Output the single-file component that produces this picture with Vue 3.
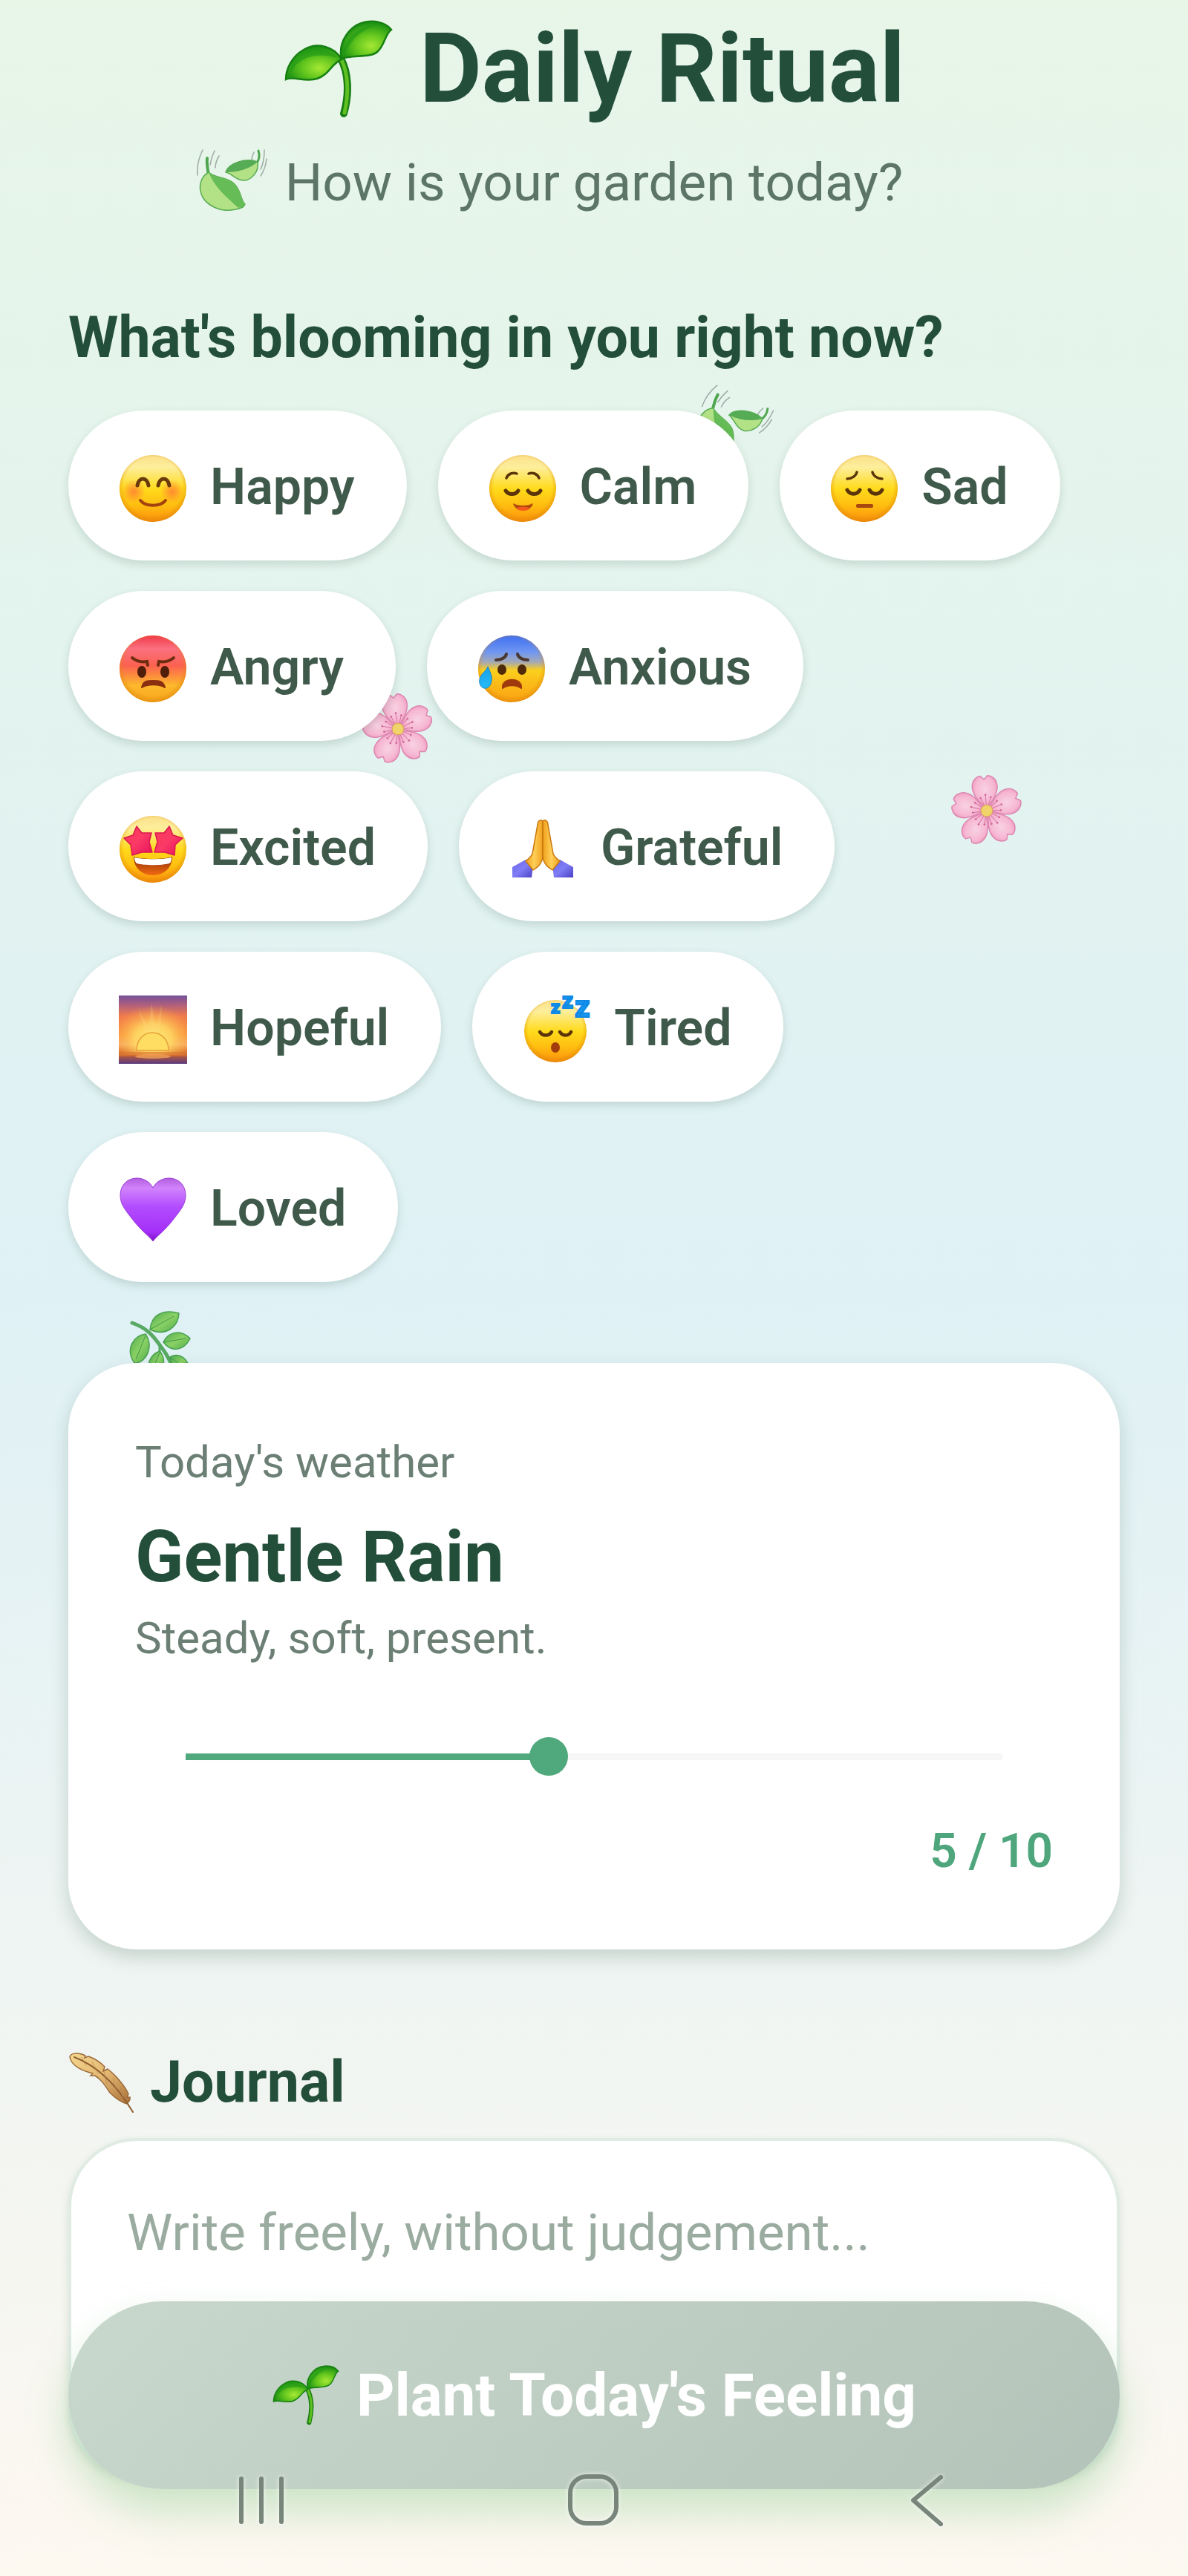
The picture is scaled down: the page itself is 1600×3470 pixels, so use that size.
<script setup>
import { computed, ref } from 'vue'

const moods = [
  { key: 'happy', label: 'Happy' },
  { key: 'calm', label: 'Calm' },
  { key: 'sad', label: 'Sad' },
  { key: 'angry', label: 'Angry' },
  { key: 'anxious', label: 'Anxious' },
  { key: 'excited', label: 'Excited' },
  { key: 'grateful', label: 'Grateful' },
  { key: 'hopeful', label: 'Hopeful' },
  { key: 'tired', label: 'Tired' },
  { key: 'loved', label: 'Loved' },
]

const yellowFaces = ['happy', 'calm', 'sad', 'excited']
const petals = [0, 72, 144, 216, 288]

const selected = ref('')
const intensity = ref(5)
const entry = ref('')

const fill = computed(() => ((intensity.value - 1) / 9) * 100 + '%')
</script>

<template>
  <div class="page">
    <svg class="defs" aria-hidden="true">
      <defs>
        <linearGradient id="g-face" x1="0" y1="0" x2="0" y2="1">
          <stop offset="0" stop-color="#fbe08a" />
          <stop offset=".18" stop-color="#fdee9c" />
          <stop offset=".5" stop-color="#ffdb1c" />
          <stop offset=".75" stop-color="#ffbe10" />
          <stop offset="1" stop-color="#fb8f0c" />
        </linearGradient>
        <radialGradient id="g-rim" cx=".5" cy=".47" r=".53">
          <stop offset=".82" stop-color="#e08a00" stop-opacity="0" />
          <stop offset="1" stop-color="#d97f08" stop-opacity=".55" />
        </radialGradient>
        <radialGradient id="g-cheek">
          <stop offset="0" stop-color="#ff7038" stop-opacity=".75" />
          <stop offset="1" stop-color="#ff7038" stop-opacity="0" />
        </radialGradient>
        <linearGradient id="g-angry" x1="0" y1="0" x2="0" y2="1">
          <stop offset="0" stop-color="#f03a4a" />
          <stop offset=".2" stop-color="#fb7080" />
          <stop offset=".45" stop-color="#fb6150" />
          <stop offset=".75" stop-color="#fdb82c" />
          <stop offset="1" stop-color="#f7a51c" />
        </linearGradient>
        <linearGradient id="g-anxious" x1="0" y1="0" x2="0" y2="1">
          <stop offset="0" stop-color="#3f6ff0" />
          <stop offset=".25" stop-color="#6f97f2" />
          <stop offset=".4" stop-color="#a5a9b4" />
          <stop offset=".52" stop-color="#fbcf1d" />
          <stop offset="1" stop-color="#fba012" />
        </linearGradient>
        <linearGradient id="g-drop" x1="0" y1="0" x2="0" y2="1">
          <stop offset="0" stop-color="#1c9fe8" />
          <stop offset="1" stop-color="#25bdf8" />
        </linearGradient>
        <linearGradient id="g-star" x1="0" y1="0" x2="1" y2="1">
          <stop offset="0" stop-color="#f93a58" />
          <stop offset=".5" stop-color="#fb3a66" />
          <stop offset="1" stop-color="#e4105c" />
        </linearGradient>
        <linearGradient id="g-mouth" x1="0" y1="0" x2="0" y2="1">
          <stop offset="0" stop-color="#8c2f0a" />
          <stop offset="1" stop-color="#f26a10" />
        </linearGradient>
        <linearGradient id="g-hand" x1="0" y1="0" x2="1" y2="0">
          <stop offset="0" stop-color="#f0a01c" />
          <stop offset=".5" stop-color="#ffcf58" />
          <stop offset="1" stop-color="#f2a01e" />
        </linearGradient>
        <linearGradient id="g-cuff" x1="0" y1="0" x2="1" y2="1">
          <stop offset="0" stop-color="#6a63e8" />
          <stop offset=".5" stop-color="#7f7df6" />
          <stop offset="1" stop-color="#4b3fc4" />
        </linearGradient>
        <linearGradient id="g-sky" x1="0" y1="0" x2="0" y2="1">
          <stop offset="0" stop-color="#74509a" />
          <stop offset=".14" stop-color="#b0607c" />
          <stop offset=".3" stop-color="#f07a4c" />
          <stop offset=".58" stop-color="#fa9340" />
          <stop offset=".72" stop-color="#f6a868" />
          <stop offset=".8" stop-color="#e27a34" />
          <stop offset=".88" stop-color="#b45a3c" />
          <stop offset="1" stop-color="#5a3a80" />
        </linearGradient>
        <radialGradient id="g-glow" cx=".5" cy=".7" r=".6">
          <stop offset="0" stop-color="#fff07c" />
          <stop offset=".45" stop-color="#ffdf66" stop-opacity=".8" />
          <stop offset="1" stop-color="#ffb040" stop-opacity="0" />
        </radialGradient>
        <linearGradient id="g-heart" x1="0" y1="0" x2="0" y2="1">
          <stop offset="0" stop-color="#b35fe0" />
          <stop offset=".16" stop-color="#d183fb" />
          <stop offset=".45" stop-color="#b24dff" />
          <stop offset=".85" stop-color="#a52ff8" />
          <stop offset="1" stop-color="#7f10c8" />
        </linearGradient>
        <radialGradient id="g-petal" cx=".5" cy=".4" r=".6">
          <stop offset="0" stop-color="#fad0e2" />
          <stop offset=".6" stop-color="#f8b4d1" />
          <stop offset="1" stop-color="#f08ab6" />
        </radialGradient>
        <linearGradient id="g-leaf" x1="0" y1="0" x2="1" y2="1">
          <stop offset="0" stop-color="#43a545" />
          <stop offset=".5" stop-color="#84cf58" />
          <stop offset="1" stop-color="#46a843" />
        </linearGradient>
        <radialGradient id="g-sprout" cx=".6" cy=".65" r=".6">
          <stop offset="0" stop-color="#a5e834" />
          <stop offset=".5" stop-color="#63c61e" />
          <stop offset="1" stop-color="#1f9414" />
        </radialGradient>
        <linearGradient id="g-feather" x1="0" y1="0" x2="1" y2="1">
          <stop offset="0" stop-color="#f4d78e" />
          <stop offset=".5" stop-color="#e3b873" />
          <stop offset="1" stop-color="#a9713a" />
        </linearGradient>

        <symbol id="sprout" viewBox="0 0 150 132">
          <path d="M78 52C88 70 90 98 82 126" fill="none" stroke="#1a7d14" stroke-width="10" stroke-linecap="round" />
          <path d="M79 54C88 72 89 98 83 125" fill="none" stroke="#5fc022" stroke-width="5" stroke-linecap="round" />
          <path d="M79 52C74 30 90 4 116 2C128 1 140 5 146 13C138 18 137 34 128 42C118 52 94 46 79 52Z" fill="url(#g-sprout)" stroke="#178012" stroke-width="2.500" />
          <path d="M80 50C88 40 92 18 126 7C100 8 82 26 80 50Z" fill="#1f9a18" opacity=".6" />
          <path d="M79 53C70 36 46 29 28 40C12 49 4 66 4 80C14 75 30 84 46 79C62 74 66 58 79 53Z" fill="url(#g-sprout)" stroke="#178012" stroke-width="2.500" />
          <path d="M11 71C20 50 45 43 74 51C58 36 34 35 22 46C12 54 10 64 11 71Z" fill="#1f9a18" opacity=".6" />
        </symbol>

        <symbol id="leaves" viewBox="0 0 96 84">
          <g fill="none" stroke="#97a5a0" stroke-width="1.500" stroke-linecap="round">
            <path d="M8 2C2 14 0 24 1 36" />
            <path d="M24 3C21 9 19 15 18 22" />
            <path d="M30 10C27 15 25 20 25 26" />
            <path d="M77 5C75 9 74 13 74 16" />
            <path d="M91 2C91 12 90 20 86 28" />
            <path d="M94 14C93 24 90 31 86 37" />
          </g>
          <path d="M14 13C13 22 15 28 16 36" fill="none" stroke="#43a044" stroke-width="4" stroke-linecap="round" />
          <path d="M16 32C5 38 1 52 8 66C16 78 32 85 46 83C56 82 64 79 65 75C59 70 60 56 50 47C40 38 24 40 16 32Z" fill="#aee07e" stroke="#4ea648" stroke-width="1.500" />
          <path d="M16 32C24 52 38 64 56 80C62 79 64 77 65 75C59 70 60 56 50 47C40 38 24 40 16 32Z" fill="#5cb84a" />
          <path d="M83 3C85 10 84 14 81 20" fill="none" stroke="#43a044" stroke-width="3" stroke-linecap="round" />
          <path d="M39 32C42 20 66 12 82 18C84 30 76 40 66 43C54 44 48 34 39 32Z" fill="#aee07e" stroke="#4ea648" stroke-width="1.500" />
          <path d="M39 32C42 20 66 12 82 18C70 28 56 32 39 32Z" fill="#4aa549" />
        </symbol>

        <symbol id="blossom" viewBox="-50 -50 100 100">
          <g v-for="angle in petals" :key="angle" :transform="`rotate(${angle})`">
            <path d="M0 -2C-9 -13 -19 -24 -17 -36C-16 -43 -10 -48 -5 -48L0 -43L5 -48C10 -48 16 -43 17 -36C19 -24 9 -13 0 -2Z" fill="url(#g-petal)" stroke="#dc7dab" stroke-width="1.500" />
            <path d="M0 -5V-22M-2 -5L-7 -18M2 -5L7 -18" stroke="#d86a9c" stroke-width="1" fill="none" />
            <circle cx="0" cy="-22" r="1.400" fill="#cf5d92" />
            <circle cx="-7" cy="-18" r="1.400" fill="#cf5d92" />
            <circle cx="7" cy="-18" r="1.400" fill="#cf5d92" />
          </g>
          <circle r="8" fill="#f3d25e" stroke="#d9a04c" stroke-width="1" />
        </symbol>

        <symbol id="herb" viewBox="0 0 84 96">
          <path d="M4 17C24 24 32 34 42 48C50 58 58 70 62 90" fill="none" stroke="#4da357" stroke-width="5" stroke-linecap="round" />
          <path d="M41 48V62" stroke="#4da357" stroke-width="3" />
          <g fill="url(#g-leaf)" stroke="#3c9a42" stroke-width="1.500">
            <path d="M28 26C30 6 46 -2 67 4C66 22 50 36 28 26Z" />
            <path d="M46 43C52 30 68 24 82 38C74 54 58 58 46 43Z" />
            <path d="M22 32C6 34 -6 52 7 71C22 72 34 50 22 32Z" />
            <path d="M41 55C28 60 22 74 28 88C42 90 54 70 41 55Z" />
            <path d="M55 63C68 56 80 66 81 80C72 88 58 80 55 63Z" />
          </g>
          <g fill="none" stroke="#338f3e" stroke-width="1">
            <path d="M28 26L60 8M46 43L76 38M22 34L9 66M41 57L31 82M56 64L76 78" />
          </g>
        </symbol>

        <symbol id="feather" viewBox="0 0 92 84">
          <path d="M2 8C3 3 10 2 18 4L23 6L22 9L27 7C36 10 44 16 49 21L47 27L53 24C66 34 78 50 81 58L79 62L83 62C84 66 81 69 79 71C68 68 60 60 56 56C48 44 44 38 36 33L30 33L33 30C20 27 4 20 2 8Z" fill="url(#g-feather)" stroke="#9c6a38" stroke-width="1.500" />
          <path d="M8 8C34 18 62 40 87 82" fill="none" stroke="#8f5f32" stroke-width="2" stroke-linecap="round" />
          <path d="M18 8L24 20M32 14L40 30M48 27L52 44M60 36L66 58M70 48L74 66" stroke="#b98548" stroke-width="1" opacity=".7" />
        </symbol>
      </defs>
    </svg>

    <div class="garden" aria-hidden="true">
      <svg class="drift drift-a"><use href="#leaves" /></svg>
      <svg class="drift drift-b"><use href="#leaves" /></svg>
      <svg class="drift petal petal-a"><use href="#blossom" /></svg>
      <svg class="drift petal petal-b"><use href="#blossom" /></svg>
      <svg class="drift sprig"><use href="#herb" /></svg>
    </div>

    <main class="content">
      <header class="header">
        <h1 class="title">
          <svg class="title-icon" aria-hidden="true"><use href="#sprout" /></svg>
          <span>Daily Ritual</span>
        </h1>
        <p class="subtitle">How is your garden today?</p>
      </header>

      <section class="moods" aria-labelledby="mood-heading">
        <h2 id="mood-heading" class="heading">What's blooming in you right now?</h2>
        <div class="chips">
          <button
            v-for="mood in moods"
            :key="mood.key"
            type="button"
            class="chip"
            :aria-pressed="selected === mood.key"
            @click="selected = mood.key"
          >
            <svg class="emoji" viewBox="0 0 92 92" aria-hidden="true">
              <template v-if="yellowFaces.includes(mood.key)">
                <circle cx="46" cy="46" r="45" fill="url(#g-face)" />
                <circle cx="46" cy="46" r="45" fill="url(#g-rim)" />
              </template>

              <g v-if="mood.key === 'happy'">
                <circle cx="20" cy="50" r="16" fill="url(#g-cheek)" />
                <circle cx="72" cy="50" r="16" fill="url(#g-cheek)" />
                <g fill="none" stroke="#6b3a0c" stroke-width="5" stroke-linecap="round">
                  <path d="M25 42C27 30 38 30 40 42" />
                  <path d="M53 42C55 30 66 30 68 42" />
                </g>
                <path d="M29 62C36 71 56 71 63 62" fill="none" stroke="#a3420f" stroke-width="4" stroke-linecap="round" />
              </g>

              <g v-else-if="mood.key === 'calm'">
                <g fill="none" stroke="#5b3409" stroke-width="3.500" stroke-linecap="round">
                  <path d="M24 32C26 26 33 24 38 26" />
                  <path d="M54 26C59 24 66 26 68 32" />
                </g>
                <g fill="none" stroke="#5b3409" stroke-width="5" stroke-linecap="round">
                  <path d="M23 49C27 55 36 55 40 49" />
                  <path d="M53 49C57 55 66 55 70 49" />
                </g>
                <path d="M33 66C40 70 52 70 60 66C58 78 35 78 33 66Z" fill="#b24a10" />
                <path d="M37 73C42 70 51 70 56 73C52 77 41 77 37 73Z" fill="#f4581c" />
              </g>

              <g v-else-if="mood.key === 'sad'">
                <g fill="none" stroke="#5b3409" stroke-width="3.500" stroke-linecap="round">
                  <path d="M23 33C29 33 35 29 36 24" />
                  <path d="M57 24C58 29 64 33 70 33" />
                </g>
                <g fill="none" stroke="#5b3409" stroke-width="5" stroke-linecap="round">
                  <path d="M23 48C27 55 36 55 40 48" />
                  <path d="M53 48C57 55 66 55 70 48" />
                </g>
                <rect x="35" y="67" width="23" height="5" rx="2" fill="#a8470f" />
              </g>

              <g v-else-if="mood.key === 'angry'">
                <circle cx="46" cy="46" r="45" fill="url(#g-angry)" />
                <circle cx="46" cy="46" r="45" fill="url(#g-rim)" />
                <g fill="none" stroke="#6e2c10" stroke-width="4" stroke-linecap="round">
                  <path d="M18 31C24 36 32 37 38 36L39 41" />
                  <path d="M74 31C68 36 60 37 54 36L53 41" />
                </g>
                <ellipse cx="31" cy="50" rx="6" ry="8" fill="#4f1e0a" />
                <ellipse cx="62" cy="50" rx="6" ry="8" fill="#4f1e0a" />
                <path d="M31 71C33 62 38 62 46 62C54 62 60 62 62 71C55 66 38 66 31 71Z" fill="#8a2f10" stroke="#8a2f10" stroke-width="2" stroke-linejoin="round" />
              </g>

              <g v-else-if="mood.key === 'anxious'">
                <circle cx="46" cy="46" r="45" fill="url(#g-anxious)" />
                <circle cx="46" cy="46" r="45" fill="url(#g-rim)" />
                <g fill="none" stroke="#4a3730" stroke-width="4" stroke-linecap="round">
                  <path d="M25 34C32 34 38 31 39 26" />
                  <path d="M54 26C55 31 61 34 68 34" />
                </g>
                <ellipse cx="33" cy="47" rx="6" ry="7" fill="#4f2a0a" />
                <ellipse cx="60" cy="47" rx="6" ry="7" fill="#4f2a0a" />
                <path d="M34 72C32 57 61 57 59 72C53 67 40 67 34 72Z" fill="#a03a0c" stroke="#a03a0c" stroke-width="2" stroke-linejoin="round" />
                <path d="M14 43C17 50 20 55 19 62C18 70 13 73 9 72C4 71 2 65 3 60C4 53 11 50 14 43Z" fill="url(#g-drop)" stroke="#1383c8" stroke-width="1" />
              </g>

              <g v-else-if="mood.key === 'excited'">
                <path d="M20 56C30 60 62 60 72 56C72 70 62 81 46 81C30 81 20 70 20 56Z" fill="url(#g-mouth)" />
                <path d="M21 57C31 60 61 60 71 57C71 61 70 64 68 65C58 68 34 68 24 65C22 63 21 60 21 57Z" fill="#fff" />
                <g fill="url(#g-star)" stroke="#d9174e" stroke-width="1.500" stroke-linejoin="round">
                  <path d="M24 15L31 24L44 24L41 36L45 50L31 50L18 54L16 40L7 31L19 27Z" />
                  <path d="M68 15L73 27L86 31L76 40L75 54L62 50L48 50L52 36L49 24L61 24Z" />
                </g>
              </g>

              <g v-else-if="mood.key === 'grateful'">
                <path d="M4 70L22 60L32 68L30 84L4 84Z" fill="url(#g-cuff)" />
                <path d="M86 70L68 60L58 68L60 84L86 84Z" fill="url(#g-cuff)" />
                <path d="M45 8C42 5 38 8 38 13L31 52C29 57 24 60 22 62L32 74C38 70 44 66 45 56Z" fill="url(#g-hand)" stroke="#c9780e" stroke-width="1.500" stroke-linejoin="round" />
                <path d="M45 8C48 5 52 8 52 13L59 52C61 57 66 60 68 62L58 74C52 70 46 66 45 56Z" fill="url(#g-hand)" stroke="#c9780e" stroke-width="1.500" stroke-linejoin="round" />
              </g>

              <g v-else-if="mood.key === 'hopeful'">
                <rect width="92" height="92" fill="url(#g-sky)" />
                <rect y="6" width="92" height="74" fill="url(#g-glow)" />
                <path d="M36 50L26 16L40 44L44 10L50 44L58 12L56 48Z" fill="#ffd880" opacity=".25" />
                <path d="M24 74C24 60 33 50 45 50C58 50 67 60 67 74Z" fill="#ffdc62" stroke="#e8a03c" stroke-width="1.500" />
                <path d="M0 76H92V82H0Z" fill="#e0742c" opacity=".6" />
                <ellipse cx="46" cy="82" rx="24" ry="3" fill="#f0a056" opacity=".8" />
              </g>

              <g v-else-if="mood.key === 'tired'">
                <circle cx="44" cy="48" r="42" fill="url(#g-face)" />
                <circle cx="44" cy="48" r="42" fill="url(#g-rim)" />
                <g fill="none" stroke="#5b3409" stroke-width="4.500" stroke-linecap="round">
                  <path d="M23 49C27 55 35 55 39 49" />
                  <path d="M50 49C54 55 62 55 65 49" />
                </g>
                <ellipse cx="44" cy="70" rx="6" ry="7" fill="#a33d0c" />
                <g class="zzz" fill="#1496f0" stroke="#1089e4">
                  <text x="38" y="24" font-size="24">z</text>
                  <text x="53" y="17" font-size="29">z</text>
                  <text x="70" y="29" font-size="40">z</text>
                </g>
              </g>

              <g v-else>
                <path d="M46 88C42 82 30 74 18 58C8 45 2 38 2 26C2 12 12 3 24 3C34 3 42 8 46 16C50 8 58 3 68 3C80 3 90 12 90 26C90 38 84 45 74 58C62 74 50 82 46 88Z" fill="url(#g-heart)" stroke="#9a3fd6" stroke-width="1" />
              </g>
            </svg>
            <span>{{ mood.label }}</span>
          </button>
        </div>
      </section>

      <section class="weather">
        <p class="weather-label">Today's weather</p>
        <h2 class="weather-title">Gentle Rain</h2>
        <p class="weather-note">Steady, soft, present.</p>
        <input
          v-model.number="intensity"
          class="slider"
          type="range"
          min="1"
          max="10"
          aria-label="Feeling intensity"
          :style="{ '--fill': fill }"
        />
        <output class="weather-value">{{ intensity }} / 10</output>
      </section>

      <section class="journal">
        <h2 class="heading journal-heading">
          <svg class="journal-icon" aria-hidden="true"><use href="#feather" /></svg>
          <label for="entry">Journal</label>
        </h2>
        <textarea id="entry" v-model="entry" class="entry" placeholder="Write freely, without judgement..."></textarea>
      </section>
    </main>

    <div class="dock">
      <button type="button" class="plant">
        <svg class="plant-icon" aria-hidden="true"><use href="#sprout" /></svg>
        <span>Plant Today's Feeling</span>
      </button>
    </div>

    <nav class="system" aria-label="System">
      <button type="button" class="system-key" aria-label="Recent apps">
        <svg viewBox="0 0 80 80"><path d="M13 11V69M40 11V69M67 11V69" /></svg>
      </button>
      <button type="button" class="system-key" aria-label="Home">
        <svg viewBox="0 0 80 80"><rect x="8" y="8" width="62" height="63" rx="22" /></svg>
      </button>
      <button type="button" class="system-key" aria-label="Back">
        <svg viewBox="0 0 80 80"><path d="M59 9L22 40L59 72" /></svg>
      </button>
    </nav>
  </div>
</template>

<style>
body {
  margin: 0;
}
</style>

<style scoped>
.page {
  position: relative;
  isolation: isolate;
  box-sizing: border-box;
  min-height: 100vh;
  overflow: hidden;
  font-family: Roboto, "Noto Sans", sans-serif;
  color: #234f3a;
  background: linear-gradient(180deg, #e8f6e8 0%, #dff1f5 50%, #fdf8f0 100%);
}

.defs {
  position: absolute;
  width: 0;
  height: 0;
}

h1,
h2,
p {
  margin: 0;
}

.garden {
  position: absolute;
  inset: 0;
  z-index: -1;
}

.drift {
  position: absolute;
  width: 96px;
  height: 84px;
  opacity: 0.92;
}

.drift-a {
  left: 265px;
  top: 200px;
}

.drift-b {
  left: 938px;
  top: 530px;
  transform: rotate(24deg);
}

.petal {
  width: 98px;
  height: 98px;
}

.petal-a {
  left: 487px;
  top: 933px;
  transform: rotate(-8deg);
}

.petal-b {
  left: 1280px;
  top: 1043px;
  transform: rotate(-5deg);
}

.sprig {
  left: 174px;
  top: 1765px;
  width: 84px;
  height: 96px;
}

.content {
  display: flex;
  flex-direction: column;
  padding: 18px 92px 134px;
}

.header {
  display: flex;
  flex-direction: column;
  align-items: center;
  gap: 36px;
}

.title {
  display: flex;
  align-items: center;
  gap: 34px;
  font-size: 129px;
  line-height: 150px;
  font-weight: 700;
}

.title-icon {
  width: 150px;
  height: 132px;
}

.subtitle {
  font-size: 71px;
  line-height: 84px;
  color: #5c7568;
}

.heading {
  font-size: 77px;
  line-height: 90px;
  font-weight: 700;
}

.moods {
  display: flex;
  flex-direction: column;
  gap: 53px;
  margin-top: 122px;
}

.chips {
  display: flex;
  flex-wrap: wrap;
  gap: 41px 42px;
}

.chip {
  box-sizing: border-box;
  display: flex;
  align-items: center;
  gap: 31px;
  height: 202px;
  padding: 4px 70px 0 68px;
  border: 0;
  border-radius: 101px;
  background: #fff;
  box-shadow: 0 5px 12px rgba(50, 90, 70, 0.18);
  font-family: inherit;
  font-size: 68px;
  line-height: 80px;
  font-weight: 600;
  color: #3f5a4b;
}

.emoji {
  flex: none;
  width: 92px;
  height: 92px;
  margin-top: 4px;
  overflow: visible;
}

.zzz {
  font-weight: 900;
  stroke-width: 2px;
}

.weather {
  display: flex;
  flex-direction: column;
  margin-top: 109px;
  padding: 99px 90px 94px;
  border-radius: 92px;
  background: #fff;
  box-shadow: 0 10px 24px rgba(50, 90, 70, 0.22);
}

.weather-label,
.weather-note {
  font-size: 60px;
  line-height: 70px;
  color: #6b7f75;
}

.weather-title {
  margin: 37px 0 20px;
  font-size: 96px;
  line-height: 110px;
  font-weight: 700;
}

.slider {
  appearance: none;
  height: 52px;
  margin: 98px 42px 64px;
  background: linear-gradient(to right, #4fa97c var(--fill), #f5f6f5 var(--fill)) center / calc(100% - 52px) 9px no-repeat;
}

.slider::-webkit-slider-runnable-track {
  height: 52px;
  background: transparent;
}

.slider::-webkit-slider-thumb {
  appearance: none;
  width: 52px;
  height: 52px;
  border-radius: 50%;
  background: #4fa97c;
}

.weather-value {
  font-size: 64px;
  line-height: 76px;
  font-weight: 600;
  text-align: right;
  color: #4fa67c;
}

.journal {
  display: flex;
  flex-direction: column;
  gap: 30px;
  margin-top: 134px;
}

.journal-heading {
  display: flex;
  align-items: center;
  gap: 18px;
}

.journal-icon {
  width: 92px;
  height: 84px;
}

.entry {
  box-sizing: border-box;
  width: 100%;
  height: 456px;
  padding: 82px 75px;
  border: 4px solid #e0ebe4;
  border-radius: 92px;
  background: #fff;
  box-shadow: 0 5px 12px rgba(50, 90, 70, 0.14);
  resize: none;
  font-family: inherit;
  font-size: 69px;
  line-height: 84px;
  color: #3f5a4b;
}

.entry::placeholder {
  color: #9aaba0;
  opacity: 1;
}

.dock {
  position: fixed;
  left: 0;
  right: 0;
  bottom: 117px;
  display: flex;
  padding: 0 92px;
}

.plant {
  flex: 1;
  display: flex;
  align-items: center;
  justify-content: center;
  gap: 22px;
  height: 253px;
  padding: 0;
  border: 0;
  border-radius: 127px;
  background: linear-gradient(135deg, #c8d8cc, #b4c3b9);
  box-shadow: 0 30px 54px rgba(110, 190, 120, 0.34);
  font-family: inherit;
  font-size: 80px;
  line-height: 90px;
  font-weight: 700;
  color: #fff;
}

.plant-icon {
  width: 92px;
  height: 81px;
}

.system {
  position: fixed;
  left: 0;
  right: 0;
  bottom: 62px;
  display: flex;
  padding: 0 8%;
}

.system-key {
  flex: 1;
  display: flex;
  justify-content: center;
  padding: 0;
  border: 0;
  background: none;
}

.system-key svg {
  width: 80px;
  height: 80px;
  fill: none;
  stroke: #78857b;
  stroke-width: 6px;
  stroke-linecap: round;
  stroke-linejoin: round;
  filter: drop-shadow(0 0 3px rgba(255, 255, 255, 0.7));
}
</style>
